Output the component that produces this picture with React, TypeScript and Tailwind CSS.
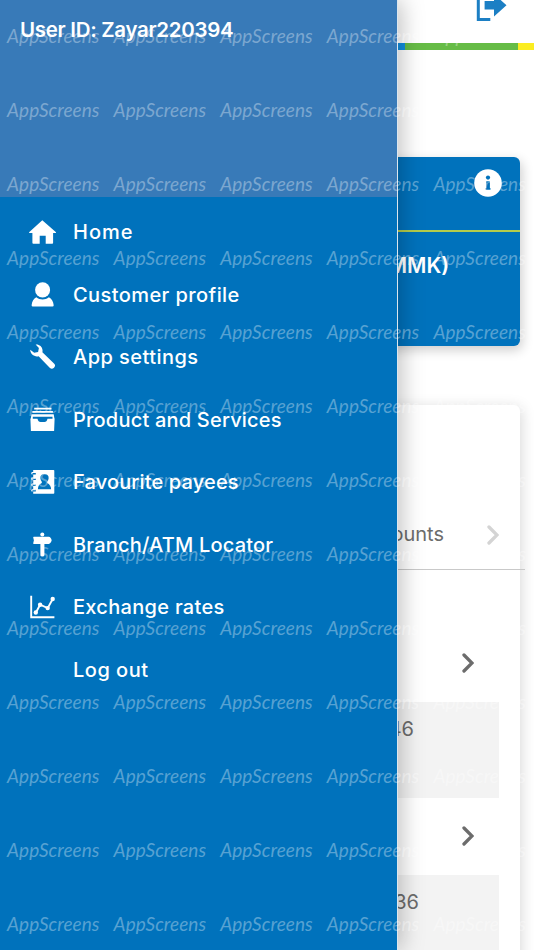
import type { ReactNode } from 'react'

const HomeIcon = () => (
  <svg viewBox="0 0 28 28" className="w-7 h-7" fill="currentColor">
    <path d="M14.3 2.2 28 14.2q.2.9-.8.9h-2.1v9.700q0 .9-.9.9h-6.500v-8h-6v8H5.300q-.9 0-.9-.9v-9.700H2q-1.200 0-.9-.9Z" />
  </svg>
)

const ProfileIcon = () => (
  <svg viewBox="0 0 28 28" className="w-7 h-7" fill="currentColor">
    <ellipse cx="14.6" cy="8.900" rx="7.500" ry="7.700" />
    <path d="M3.600 24.300C4 20 5.700 17.500 8.300 16.200c3.600 3 9 3 12.600 0 2.600 1.300 4.400 3.800 4.800 8.100q0 1.200-1.200 1.200H4.800q-1.200 0-1.200-1.200Z" />
  </svg>
)

const WrenchIcon = () => (
  <svg viewBox="0 0 28 28" className="w-7 h-7" fill="currentColor">
    <path d="M7.600 1.500c3.500-.4 6.700 2 6.900 5.600.1.800 0 1.400-.1 2.100L26 20.400a3 3 0 0 1-4.300 4.300L10.600 13.200c-4.200 1-8.500-2.100-8.400-6.500l4 3.100 3.900-.9.8-3.900Z" />
  </svg>
)

const BoxIcon = () => (
  <svg viewBox="0 0 28 28" className="w-7 h-7" fill="currentColor">
    <path d="M6.200 1.700h17.300v1.700H6.200ZM4.400 4.900h20.500v1.900H4.400Z" />
    <path d="M3.500 8.300h22.200l.8 4.800h-2v-2.300H4.800v2.300H2.700Z" />
    <path d="M2.400 12.800h7.100c.5 2.500 1.500 3.100 3 3.100h4c1.500 0 2.500-.6 3-3.100h7.100l-.5 12.200H2.900Z" />
  </svg>
)

const PayeeIcon = () => (
  <svg viewBox="0 0 28 28" className="w-7 h-7" fill="currentColor">
    <path
      fillRule="evenodd"
      d="M5.200 2h20.300q.8 0 .8.800v22.100q0 .8-.8.800H5.200v-2.300h2.600v-1.600H5.200v-3.800h2.600v-1.600H5.200v-4.400h2.600v-1.600H5.200V6.500h2.600V4.900H5.200ZM16.500 6c-3.100 0-4.500 2-4.100 4.500.2 1.300.6 2.300 1.400 3.200V15c-2.400 1.300-3.800 2.900-3.900 6.300h13.200c-.1-3.400-1.500-5-3.900-6.300v-1.300c.8-.9 1.200-1.900 1.400-3.200C21 8 19.600 6 16.500 6Z"
    />
    <path
      d="M7.500 4.500H4.400q-1.300.8 0 1.700M7.500 10H4.400q-1.300.8 0 1.700M7.500 16H4.400q-1.300.8 0 1.700M7.500 21.700H4.400q-1.300.8 0 1.700"
      fill="none"
      stroke="currentColor"
      strokeWidth="1.100"
    />
  </svg>
)

const SignIcon = () => (
  <svg viewBox="0 0 28 28" className="w-7 h-7" fill="currentColor">
    <circle cx="14.300" cy="3.600" r="2" />
    <path d="M5.800 5.700h15q2 .2 2.900 3.600-.9 3.400-2.900 3.600h-15q-.7 0-.6-.7l.7-2.900-.7-2.900q0-.7.6-.7ZM12.400 12.500h4v12q-.2 1.100-2 1.100t-2-1.100Z" />
  </svg>
)

const RatesIcon = () => (
  <svg viewBox="0 0 28 28" className="w-7 h-7" fill="currentColor">
    <path
      d="M3.200 2.700v21.500h23.200M7.800 19.700l4.300-8 7.600 3.400L24.700 6"
      fill="none"
      stroke="currentColor"
      strokeWidth="1.900"
    />
    <circle cx="7.800" cy="19.500" r="2.200" />
    <circle cx="12.100" cy="11.700" r="2.200" />
    <circle cx="19.700" cy="15.100" r="2.200" />
    <circle cx="24.700" cy="6" r="2.200" />
  </svg>
)

const menuItems: { label: string; icon: ReactNode; tracking: string }[] = [
  { label: 'Home', icon: <HomeIcon />, tracking: 'tracking-[1px]' },
  { label: 'Customer profile', icon: <ProfileIcon />, tracking: 'tracking-[0.42px]' },
  { label: 'App settings', icon: <WrenchIcon />, tracking: 'tracking-[0.45px]' },
  { label: 'Product and Services', icon: <BoxIcon />, tracking: 'tracking-[0.2px]' },
  { label: 'Favourite payees', icon: <PayeeIcon />, tracking: 'tracking-[0.15px]' },
  { label: 'Branch/ATM Locator', icon: <SignIcon />, tracking: 'tracking-[0.2px]' },
  { label: 'Exchange rates', icon: <RatesIcon />, tracking: 'tracking-[0.3px]' },
  { label: 'Log out', icon: null, tracking: 'tracking-[0.5px]' },
]

const Chevron = () => (
  <svg viewBox="0 0 12 20" className="w-3 h-5" fill="none" stroke="currentColor" strokeWidth="3.300" strokeLinecap="round">
    <path d="M2 2l8 8-8 8" />
  </svg>
)

const accounts = ['46', '36']

function Watermark() {
  return (
    <div className="absolute left-[7px] top-[23.5px] z-20 grid grid-cols-[repeat(5,106.6px)] auto-rows-[74px] pointer-events-none select-none">
      {Array.from({ length: 65 }, (_, i) => (
        <span
          key={i}
          className="font-['Lato'] italic text-[19px] leading-6 tracking-[0.05px] text-white/35"
        >
          AppScreens
        </span>
      ))}
    </div>
  )
}

function Drawer() {
  return (
    <aside className="absolute inset-y-0 left-0 z-10 w-[398px] bg-[#0072bc] border-r border-[#dbe6ee] shadow-[3px_0_22px_rgba(0,0,0,0.26)]">
      <div className="h-[197px] bg-[#387ab8] pl-5 pt-[16px]">
        <p className="text-[20.5px] leading-7 font-semibold whitespace-nowrap tracking-[-0.3px]">User ID: Zayar220394</p>
      </div>
      <nav className="pt-1">
        {menuItems.map(item => (
          <button key={item.label} className="flex items-center w-full h-[62.5px] pl-7 text-left">
            <span className="w-[45px]">{item.icon}</span>
            <span className={`text-[20px] font-medium whitespace-nowrap ${item.tracking}`}>{item.label}</span>
          </button>
        ))}
      </nav>
    </aside>
  )
}

export default function App() {
  return (
    <main className="relative h-[950px] w-[534px] overflow-hidden bg-white text-white font-['Inter',sans-serif]">
      <header className="h-[43px] flex justify-end pr-[26px] text-[#1c7fc4]">
        <svg viewBox="0 0 32 22" className="w-8 h-[22px]" fill="currentColor">
          <path d="M.8 0h3v17.900h10.500V21H.8Z" />
          <path d="M8.600 1H18v-7L30.500 5.300 18 16.600V9.400H8.600Z" />
        </svg>
      </header>
      <div className="flex h-[7px]">
        <div className="w-[405px] bg-[#118fe0]" />
        <div className="w-[113px] bg-[#66bc46]" />
        <div className="flex-1 bg-[#fbed21]" />
      </div>

      <section className="mt-[107px] ml-3.5 mr-3.5 h-[189px] rounded-md bg-[#0072bc] shadow-[2px_4px_12px_rgba(0,0,0,0.2)]">
        <div className="flex justify-end h-[75px] pt-3 pr-[18px] border-b-2 border-[#b4cb4b]">
          <svg viewBox="0 0 28 28" className="w-7 h-7">
            <circle cx="14" cy="14" r="13.800" fill="white" />
            <circle cx="14" cy="8.600" r="2.100" fill="#0072bc" />
            <path d="M12 12.200h3.900v6.900h.6v1.700h-4.900v-1.700h.6v-5.200H12Z" fill="#0072bc" />
          </svg>
        </div>
        <p className="pt-[20px] pr-[71px] text-right text-[21px] leading-7 font-semibold">MMK)</p>
      </section>

      <section className="mt-[59px] ml-3.5 mr-3.5 h-[600px] rounded-md bg-white text-[#6c6c6c] shadow-[2px_2px_14px_rgba(0,0,0,0.15)]">
        <div className="-mr-[5px] h-[165px] flex items-end justify-end gap-[43px] pb-[21px] pr-[26px] border-b border-[#c9c9c9]">
          <span className="text-[20px] leading-7">Accounts</span>
          <span className="mb-[3px]">
            <span className="text-[#d4d4d4]">
              <Chevron />
            </span>
          </span>
        </div>
        <div className="pt-[56px] pr-[21px]">
          {accounts.map((ending, i) => (
            <div key={ending} className="h-[172.5px]">
              <div className="h-[76px] flex justify-end pt-[27px] pr-[25px]">
                <Chevron />
              </div>
              <div className={`h-[96px] bg-[#f3f3f3] pt-[13px] text-right text-[20px] leading-7 ${i === 0 ? 'pr-[85px]' : 'pr-[80px]'}`}>
                {ending}
              </div>
            </div>
          ))}
        </div>
      </section>

      <Drawer />
      <Watermark />
    </main>
  )
}
